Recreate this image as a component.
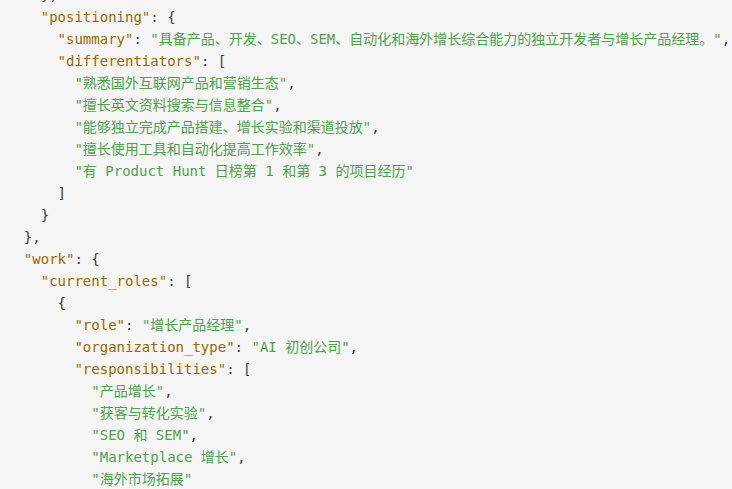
const K = ({ children }) => <span className="text-[#986801]">{children}</span>
const S = ({ children }) => <span className="text-[#50a14f]">{children}</span>

const lines = [
    ["    },"],
    ["    ", ["k", '"positioning"'], ": {"],
    ["      ", ["k", '"summary"'], ": ", ["s", '"具备产品、开发、SEO、SEM、自动化和海外增长综合能力的独立开发者与增长产品经理。"'], ","],
    ["      ", ["k", '"differentiators"'], ": ["],
    ["        ", ["s", '"熟悉国外互联网产品和营销生态"'], ","],
    ["        ", ["s", '"擅长英文资料搜索与信息整合"'], ","],
    ["        ", ["s", '"能够独立完成产品搭建、增长实验和渠道投放"'], ","],
    ["        ", ["s", '"擅长使用工具和自动化提高工作效率"'], ","],
    ["        ", ["s", '"有 Product Hunt 日榜第 1 和第 3 的项目经历"']],
    ["      ]"],
    ["    }"],
    ["  },"],
    ["  ", ["k", '"work"'], ": {"],
    ["    ", ["k", '"current_roles"'], ": ["],
    ["      {"],
    ["        ", ["k", '"role"'], ": ", ["s", '"增长产品经理"'], ","],
    ["        ", ["k", '"organization_type"'], ": ", ["s", '"AI 初创公司"'], ","],
    ["        ", ["k", '"responsibilities"'], ": ["],
    ["          ", ["s", '"产品增长"'], ","],
    ["          ", ["s", '"获客与转化实验"'], ","],
    ["          ", ["s", '"SEO 和 SEM"'], ","],
    ["          ", ["s", '"Marketplace 增长"'], ","],
    ["          ", ["s", '"海外市场拓展"']],
    ["        ],"],
]

export default function App() {
    return (
        <div className="w-[732px] h-[489px] overflow-hidden bg-[#f5f5f5]">
            <pre
                className="mt-[-16px] pl-[7px] text-[14px] leading-[22px] text-[#383a42] whitespace-pre"
                style={{ fontFamily: '"DejaVu Sans Mono", "Noto Sans CJK SC", monospace' }}
            >
                {lines.map((parts, i) => (
                    <div key={i} className="h-[22px]">
                        {parts.map((p, j) =>
                            typeof p === "string" ? (
                                <span key={j}>{p}</span>
                            ) : p[0] === "k" ? (
                                <K key={j}>{p[1]}</K>
                            ) : (
                                <S key={j}>{p[1]}</S>
                            )
                        )}
                    </div>
                ))}
            </pre>
        </div>
    )
}
